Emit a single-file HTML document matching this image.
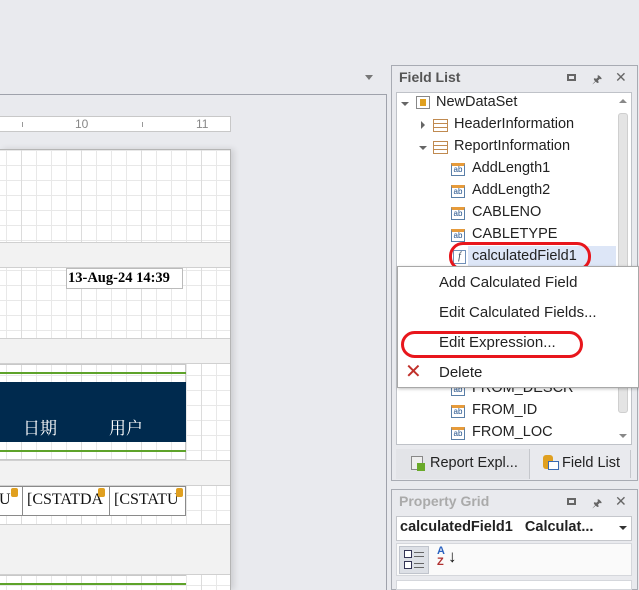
<!DOCTYPE html>
<html><head><meta charset="utf-8"><style>
*{margin:0;padding:0;box-sizing:border-box}
body{width:639px;height:590px;overflow:hidden;background:#e9eaee;position:relative;font-family:"Segoe UI","Liberation Sans","DejaVu Sans",sans-serif}
.a{position:absolute}
.grid{background-color:#fff;background-image:linear-gradient(90deg,#dcdcdc 1px,transparent 1px),linear-gradient(#e8e8e8 1px,transparent 1px),linear-gradient(90deg,#e8e8e8 1px,transparent 1px);background-size:60px 15px,15px 15px,15px 15px;background-position:21px 0,6px 0,6px 0}
.band{background:#f2f2f2;border-top:1px solid #d0d0d0;border-bottom:1px solid #d0d0d0}
.ti{font-size:14.5px;color:#222;white-space:nowrap}
.ab{display:inline-block;width:14px;height:13px;border:1px solid #5a7fa8;border-top:3px solid #e79b3a;font-size:8px;color:#1f4f8a;line-height:8px;text-align:center;background:#fff;vertical-align:middle}
.tb{display:inline-block;width:15px;height:13px;border:1px solid #c08a50;background:repeating-linear-gradient(#fff 0 3px,#c08a50 3px 4px),#fff;vertical-align:middle}
.mi{font-size:15px;color:#222;position:absolute;left:41px}
</style></head><body>
<div class="a" style="left:0;top:94px;width:387px;height:496px;border-top:1px solid #9fa2ab;border-right:1px solid #9fa2ab"></div>
<div class="a" style="left:365px;top:75px;width:0;height:0;border-left:4px solid transparent;border-right:4px solid transparent;border-top:5px solid #777"></div>
<div class="a" style="left:0;top:116px;width:231px;height:16px;background:#fff;border:1px solid #c8c8c8;border-left:none;font-size:12px;color:#888;line-height:14px">
<span class="a" style="left:75px">10</span><span class="a" style="left:196px">11</span>
<span class="a" style="left:22px;top:5px;width:1px;height:5px;background:#999"></span>
<span class="a" style="left:142px;top:5px;width:1px;height:5px;background:#999"></span>
</div>
<div class="a grid" style="left:0;top:149px;width:231px;height:441px;border-top:1px solid #b5b5b5;border-right:1px solid #b5b5b5;box-shadow:3px 0 6px rgba(0,0,0,.12)"></div>
<div class="a band" style="left:0;top:242px;width:230px;height:26px"></div>
<div class="a" style="left:66px;top:268px;width:117px;height:21px;border:1px solid #bbb;background:#fff;font:bold 14.5px 'Liberation Serif',serif;padding:1px 0 0 1px;white-space:nowrap">13-Aug-24 14:39</div>
<div class="a band" style="left:0;top:338px;width:230px;height:26px"></div>
<div class="a" style="left:0;top:364px;width:186px;height:96px;border:1px solid #c8c8c8;border-left:none"></div>
<div class="a" style="left:0;top:372px;width:186px;height:2px;background:#5ea32a"></div>
<div class="a" style="left:0;top:382px;width:186px;height:60px;background:#002a4e;color:#fff;font:17px 'Liberation Serif','Noto Serif CJK SC',serif"><span class="a" style="left:23px;top:32px">日期</span><span class="a" style="left:109px;top:32px">用户</span></div>
<div class="a" style="left:0;top:450px;width:186px;height:2px;background:#5ea32a"></div>
<div class="a band" style="left:0;top:460px;width:230px;height:26px"></div>
<div class="a" style="left:0;top:486px;width:186px;height:30px;border:1px solid #8a8a8a;border-left:none;background:#fff;font:16px 'Liberation Serif',serif;color:#111;line-height:26px">
<span class="a" style="left:-1px">U</span><span class="a" style="left:22px;top:-1px;width:1px;height:30px;background:#8a8a8a"></span>
<span class="a" style="left:27px">[CSTATDA</span><span class="a" style="left:109px;top:-1px;width:1px;height:30px;background:#8a8a8a"></span>
<span class="a" style="left:114px">[CSTATU</span>
<span class="a" style="left:11px;top:1px;width:7px;height:9px;background:#e0a020;border-radius:2px"></span>
<span class="a" style="left:98px;top:1px;width:7px;height:9px;background:#e0a020;border-radius:2px"></span>
<span class="a" style="left:176px;top:1px;width:7px;height:9px;background:#e0a020;border-radius:2px"></span>
</div>
<div class="a band" style="left:0;top:524px;width:230px;height:26px"></div>
<div class="a band" style="left:0;top:549px;width:230px;height:26px;border-top:none"></div>
<div class="a" style="left:0;top:575px;width:186px;height:15px;border-top:1px solid #c8c8c8"></div>
<div class="a" style="left:0;top:583px;width:186px;height:2px;background:#5ea32a"></div>

<div class="a" style="left:391px;top:65px;width:247px;height:416px;border:1px solid #a8abb3;background:#e9eaee"></div>
<div class="a" style="left:399px;top:69px;font-size:14px;font-weight:bold;color:#555">Field List</div>
<div class="a" style="left:567px;top:74px;width:9px;height:7px;border:2px solid #666"></div>
<div class="a" style="left:592px;top:71px;font-size:11px;color:#666">&#x1F588;</div>
<div class="a" style="left:615px;top:69px;font-size:14px;color:#666">✕</div>
<div class="a" style="left:396px;top:92px;width:236px;height:353px;background:#fff;border:1px solid #bfc2c8"></div>
<div class="a" style="left:616px;top:93px;width:15px;height:351px;background:#fff"></div>
<div class="a" style="left:618px;top:113px;width:10px;height:300px;background:#e4e4e4;border:1px solid #cfcfcf;border-radius:3px"></div>
<div class="a" style="left:619px;top:99px;border-left:4px solid transparent;border-right:4px solid transparent;border-bottom:4px solid #888"></div>
<div class="a" style="left:619px;top:434px;border-left:4px solid transparent;border-right:4px solid transparent;border-top:4px solid #888"></div>

<div class="a" style="left:401px;top:102px;border-left:4px solid transparent;border-right:4px solid transparent;border-top:4px solid #666"></div>
<div class="a" style="left:416px;top:96px;width:14px;height:13px;border:1px solid #888;background:#fff"><div style="margin:2px 3px;width:6px;height:7px;background:#e0a020"></div></div>
<div class="a ti" style="left:436px;top:94px">NewDataSet</div>
<div class="a" style="left:421px;top:121px;border-top:4px solid transparent;border-bottom:4px solid transparent;border-left:4px solid #666"></div>
<div class="a" style="left:433px;top:117px"><span class="tb"></span></div>
<div class="a ti" style="left:454px;top:116px">HeaderInformation</div>
<div class="a" style="left:419px;top:146px;border-left:4px solid transparent;border-right:4px solid transparent;border-top:4px solid #666"></div>
<div class="a" style="left:433px;top:139px"><span class="tb"></span></div>
<div class="a ti" style="left:454px;top:138px">ReportInformation</div>
<div class="a" style="left:451px;top:161px"><span class="ab">ab</span></div><div class="a ti" style="left:472px;top:160px">AddLength1</div>
<div class="a" style="left:451px;top:183px"><span class="ab">ab</span></div><div class="a ti" style="left:472px;top:182px">AddLength2</div>
<div class="a" style="left:451px;top:205px"><span class="ab">ab</span></div><div class="a ti" style="left:472px;top:204px">CABLENO</div>
<div class="a" style="left:451px;top:227px"><span class="ab">ab</span></div><div class="a ti" style="left:472px;top:226px">CABLETYPE</div>
<div class="a" style="left:468px;top:246px;width:148px;height:22px;background:#dde6f7"></div>
<div class="a" style="left:453px;top:250px;width:13px;height:14px;border:1px solid #7090b8;background:#fff;font:italic 10px 'Liberation Serif',serif;text-align:center;color:#345">f</div>
<div class="a ti" style="left:472px;top:248px">calculatedField1</div>
<div class="a" style="left:449px;top:242px;width:142px;height:29px;border:3px solid #e8161c;border-radius:14px"></div>
<div class="a" style="left:451px;top:381px"><span class="ab">ab</span></div><div class="a ti" style="left:472px;top:380px">FROM_DESCR</div>
<div class="a" style="left:451px;top:403px"><span class="ab">ab</span></div><div class="a ti" style="left:472px;top:402px">FROM_ID</div>
<div class="a" style="left:451px;top:425px"><span class="ab">ab</span></div><div class="a ti" style="left:472px;top:424px">FROM_LOC</div>

<div class="a" style="left:397px;top:266px;width:242px;height:122px;background:#fff;border:1px solid #a8a8a8;box-shadow:1px 1px 3px rgba(0,0,0,.25)">
<div class="mi" style="top:7px">Add Calculated Field</div>
<div class="mi" style="top:37px">Edit Calculated Fields...</div>
<div class="mi" style="top:67px">Edit Expression...</div>
<div class="mi" style="top:97px">Delete</div>
<div class="a" style="left:7px;top:95px;font-size:20px;color:#c0302a;font-weight:bold;line-height:20px">✕</div>
</div>
<div class="a" style="left:401px;top:331px;width:182px;height:27px;border:3px solid #e8161c;border-radius:14px"></div>

<div class="a" style="left:396px;top:449px;width:134px;height:30px;border-right:1px solid #c5c7cc;background:#e3e4e8"></div>
<div class="a" style="left:411px;top:456px;width:12px;height:14px;border:1px solid #888;background:#eee"></div><div class="a" style="left:417px;top:463px;width:8px;height:8px;background:#6aaa2a"></div>
<div class="a ti" style="left:430px;top:455px">Report Expl...</div>
<div class="a" style="left:543px;top:455px;width:10px;height:14px;background:#e0a020;border-radius:3px"></div><div class="a" style="left:548px;top:461px;width:11px;height:9px;border:1px solid #3a6ab0;background:#fff"></div>
<div class="a ti" style="left:562px;top:455px">Field List</div>
<div class="a" style="left:630px;top:450px;width:1px;height:28px;background:#c5c7cc"></div>

<div class="a" style="left:391px;top:489px;width:247px;height:101px;border:1px solid #a8abb3;background:#e9eaee"></div>
<div class="a" style="left:399px;top:493px;font-size:14px;font-weight:bold;color:#aaa">Property Grid</div>
<div class="a" style="left:567px;top:498px;width:9px;height:7px;border:2px solid #666"></div>
<div class="a" style="left:592px;top:495px;font-size:11px;color:#666">&#x1F588;</div>
<div class="a" style="left:615px;top:493px;font-size:14px;color:#666">✕</div>
<div class="a" style="left:396px;top:516px;width:236px;height:25px;background:#fff;border:1px solid #c5c7cc;font-size:14.5px;font-weight:bold;color:#222;padding:2px 0 0 3px;white-space:nowrap">calculatedField1&nbsp;&nbsp;&nbsp;Calculat...</div>
<div class="a" style="left:619px;top:526px;border-left:4px solid transparent;border-right:4px solid transparent;border-top:4px solid #333"></div>
<div class="a" style="left:396px;top:543px;width:236px;height:33px;background:#fafafa;border:1px solid #d5d7dc"></div>
<div class="a" style="left:399px;top:546px;width:30px;height:28px;background:#dde0e6;border:1px solid #c0c4cc"></div>
<div class="a" style="left:404px;top:550px;width:8px;height:8px;border:1px solid #335;background:#fff"></div><div class="a" style="left:404px;top:561px;width:8px;height:8px;border:1px solid #335;background:#fff"></div>
<div class="a" style="left:414px;top:552px;width:10px;height:5px;border-top:1px solid #666;border-bottom:1px solid #666"></div><div class="a" style="left:414px;top:563px;width:10px;height:5px;border-top:1px solid #666;border-bottom:1px solid #666"></div>
<div class="a" style="left:437px;top:546px;font:bold 11px 'Liberation Sans',sans-serif;color:#2a62c0;line-height:11px">A<br><span style="color:#b03030">Z</span></div>
<div class="a" style="left:448px;top:548px;font-size:17px;color:#111;line-height:18px;font-weight:bold">↓</div>
<div class="a" style="left:396px;top:580px;width:236px;height:10px;background:#fff;border:1px solid #d5d7dc"></div>
</body></html>
